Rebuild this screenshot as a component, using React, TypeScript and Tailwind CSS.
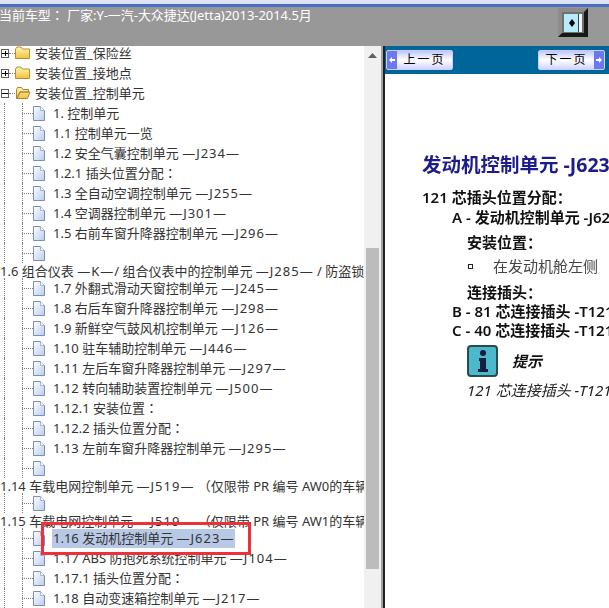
const font = "font-['Noto_Sans','Noto_Sans_CJK_SC',sans-serif]";

const Folder = ({ open }: { open?: boolean }) => (
  <svg width="16" height="14" viewBox="0 0 16 14" className="shrink-0">
    <defs>
      <linearGradient id="fold" x1="0" y1="0" x2="0" y2="1">
        <stop offset="0" stopColor="#fff6b8" />
        <stop offset="1" stopColor="#f2c234" />
      </linearGradient>
    </defs>
    {open ? (
      <path d="M1.5 3.5 L2.5 1.5 H6.5 L8 3.5 H13.5 V6 H5 L2 12.5 H1.5 Z M5 6 H15 L12.5 12.5 H2 Z" fill="url(#fold)" stroke="#a8863c" strokeWidth="1" />
    ) : (
      <path d="M0.5 3 L2 1 H6 L7.5 3 H14.5 V12.5 H0.5 Z" fill="url(#fold)" stroke="#b0903c" strokeWidth="1" />
    )}
  </svg>
);

const Doc = () => (
  <svg width="12" height="15" viewBox="0 0 12 15" className="shrink-0">
    <defs>
      <linearGradient id="page" x1="0" y1="0" x2="1" y2="1">
        <stop offset="0" stopColor="#ffffff" />
        <stop offset="1" stopColor="#b8cdf0" />
      </linearGradient>
    </defs>
    <path d="M0.5 0.5 H7.5 L11.5 4.5 V14.5 H0.5 Z" fill="url(#page)" stroke="#7c8eb4" />
    <path d="M7.5 0.5 V4.5 H11.5" fill="#fff" stroke="#a4b4d0" />
  </svg>
);

const Toggle = ({ minus }: { minus?: boolean }) => (
  <span className="relative ml-px flex h-[9px] w-[8px] shrink-0 items-center justify-center border border-[#606060] bg-white">
    <span className="h-px w-[6px] bg-black" />
    {!minus && <span className="absolute h-[5px] w-px bg-black" />}
  </span>
);

// centred full-width colon, the TC face draws it that way
const Colon = () => <span className="font-['Noto_Sans_CJK_TC',sans-serif]">：</span>;

// the —J234— part sits wider in the picture than the plain font gives
const Label = ({ text }: { text: string }) => (
  <span>
    {text.split(/(—\S+—|：)/).map((part, i) => {
      if (part === "：") return <Colon key={i} />;
      return i % 2 ? (
        <span key={i} className="tracking-[1px]">{part}</span>
      ) : (
        <span key={i}>{part}</span>
      );
    })}
  </span>
);

const FolderRow = ({ label, open }: { label: string; open?: boolean }) => (
  <div className="flex h-5 items-center">
    <Toggle minus={open} />
    <span className="w-[6px] border-t border-dotted border-[#808080]" />
    <Folder open={open} />
    <span className="ml-[4px] whitespace-nowrap">{label}</span>
  </div>
);

const Branch = () => (
  <>
    <span className="absolute bottom-0 left-[4px] top-0 border-l border-dotted border-[#808080]" />
    <span className="absolute bottom-0 left-[22px] top-0 border-l border-dotted border-[#808080]" />
    <span className="w-[11px] border-t border-dotted border-[#808080]" />
    <Doc />
  </>
);

const Leaf = ({ label }: { label?: string }) => (
  <div className="relative flex h-5 items-center pl-[22px]">
    <Branch />
    {label && (
      <span className="ml-[8px] whitespace-nowrap">
        <Label text={label} />
      </span>
    )}
  </div>
);

const Wide = ({ label }: { label: string }) => (
  <div className="flex h-[15px] items-center whitespace-nowrap">
    <Label text={label} />
  </div>
);

const NavButton = ({ label, next }: { label: string; next?: boolean }) => (
  <div className={`flex h-[20px] w-[67px] items-center overflow-hidden rounded-[2px] border border-[#c8d0f8] bg-gradient-to-b from-[#c0c6f8] via-white to-[#d0d4fa] ${next ? "flex-row-reverse" : ""}`}>
    <span className="flex h-full w-[10px] shrink-0 items-center justify-center bg-[#6c78f0]">
      <svg width="8" height="8" viewBox="0 0 8 8">
        <path d={next ? "M1 3 H4 V1 L7 4 L4 7 V5 H1 Z" : "M7 3 H4 V1 L1 4 L4 7 V5 H7 Z"} fill="#fff" />
      </svg>
    </span>
    <span className="flex-1 text-center text-[12px] tracking-[2px] text-black">{label}</span>
  </div>
);

export default function App() {
  return (
    <div className={`relative flex h-[608px] w-[609px] flex-col overflow-hidden bg-white ${font}`}>
      <div className="h-[4px] bg-[#dbe3f5]" />
      <div className="h-[3px] bg-[#4a6cc4]" />
      <div className="flex h-[39px] items-start bg-[#989898]">
        <span className="-ml-px flex-1 whitespace-nowrap text-[13px] leading-[15px] tracking-[-0.05px] text-white">
          当前车型<Colon />&nbsp;厂家:Y-一汽-大众捷达(Jetta)2013-2014.5月
        </span>
        <div className="mr-[21px] mt-[1px] flex h-[29px] w-[30px] items-center justify-center border-[4px] border-b-[#181818] border-l-[#8c8c8c] border-r-[#181818] border-t-[#8c8c8c] bg-[#707070]">
          <div className="flex h-[18px] w-[18px] items-center justify-center bg-[#b4ecfc]">
            <svg width="18" height="18" viewBox="0 0 18 18">
              <path d="M8 5 L11 9 L8 13 L5 9 Z" fill="#000" />
              <rect x="14" y="0" width="1" height="18" fill="#404040" />
              <rect x="15" y="0" width="3" height="18" fill="#f4f4f4" />
            </svg>
          </div>
        </div>
      </div>

      <div className="flex min-h-0 flex-1">
        <div className="w-[364px] shrink-0 overflow-hidden text-[13px] leading-5 text-[#333]">
          <div className="-mt-[3px]">
            <FolderRow label="安装位置_保险丝" />
            <FolderRow label="安装位置_接地点" />
            <FolderRow label="安装位置_控制单元" open />
            <Leaf label="1. 控制单元" />
            <Leaf label="1.1 控制单元一览" />
            <Leaf label="1.2 安全气囊控制单元 —J234—" />
            <Leaf label="1.2.1 插头位置分配：" />
            <Leaf label="1.3 全自动空调控制单元 —J255—" />
            <Leaf label="1.4 空调器控制单元 —J301—" />
            <Leaf label="1.5 右前车窗升降器控制单元 —J296—" />
            <Leaf />
            <Wide label="1.6 组合仪表 —K—/ 组合仪表中的控制单元 —J285— / 防盗锁止系统" />
            <Leaf label="1.7 外翻式滑动天窗控制单元 —J245—" />
            <Leaf label="1.8 右后车窗升降器控制单元 —J298—" />
            <Leaf label="1.9 新鲜空气鼓风机控制单元 —J126—" />
            <Leaf label="1.10 驻车辅助控制单元 —J446—" />
            <Leaf label="1.11 左后车窗升降器控制单元 —J297—" />
            <Leaf label="1.12 转向辅助装置控制单元 —J500—" />
            <Leaf label="1.12.1 安装位置：" />
            <Leaf label="1.12.2 插头位置分配：" />
            <Leaf label="1.13 左前车窗升降器控制单元 —J295—" />
            <Leaf />
            <Wide label="1.14 车载电网控制单元 —J519— （仅限带 PR 编号 AW0的车辆）" />
            <Leaf />
            <Wide label="1.15 车载电网控制单元 —J519— （仅限带 PR 编号 AW1的车辆）" />
            <div className="relative flex h-5 items-center pl-[22px]">
              <Branch />
              <span className="ml-[7px] whitespace-nowrap bg-[#b8c9e6] px-px leading-[19px]">
                <Label text="1.16 发动机控制单元 —J623—" />
              </span>
            </div>
            <Leaf label="1.17 ABS 防抱死系统控制单元 —J104—" />
            <Leaf label="1.17.1 插头位置分配：" />
            <Leaf label="1.18 自动变速箱控制单元 —J217—" />
          </div>
        </div>

        <div className="flex w-[17px] shrink-0 flex-col items-center bg-[#f0f0f0]">
          <svg width="9" height="5" viewBox="0 0 9 5" className="mt-[7px]">
            <path d="M4.5 0 L9 5 H0 Z" fill="#606060" />
          </svg>
          <div className="mt-[190px] h-[321px] w-[13px] bg-[#bcbcbc]" />
        </div>

        <div className="w-[2px] shrink-0 bg-[#a0a0a0]" />
        <div className="w-[2px] shrink-0 bg-[#202020]" />

        <div className="min-w-0 flex-1 overflow-hidden">
          <div className="flex h-[28px] items-center justify-between bg-[#006699] pl-[1px] pr-[4px]">
            <NavButton label="上一页" />
            <NavButton label="下一页" next />
          </div>
          <div className="whitespace-nowrap pl-[37px] pt-[78px] font-semibold text-[#111] blur-[0.4px]">
            <div className="text-[19.5px] font-bold leading-[26px] text-[#1c1c8c]">发动机控制单元 -J623-</div>
            <div className="mt-[9px] text-[15px] leading-[20px]">121 芯插头位置分配：</div>
            <div className="pl-[30px] text-[15px] leading-[20px]">A - 发动机控制单元 -J623-</div>
            <div className="mt-[5px] pl-[45px] text-[15px] leading-[20px]">安装位置：</div>
            <div className="mt-[4px] flex items-center pl-[46px] text-[15px] font-normal leading-[20px] text-[#444]">
              <span className="h-[5px] w-[5px] border border-[#222]" />
              <span className="ml-[20px]">在发动机舱左侧</span>
            </div>
            <div className="mt-[6px] pl-[45px] text-[15px] leading-[20px]">连接插头：</div>
            <div className="pl-[30px] text-[15px] leading-[19px]">B - 81 芯连接插头 -T121</div>
            <div className="pl-[30px] text-[15px] leading-[19px]">C - 40 芯连接插头 -T121</div>
            <div className="mt-[5px] flex items-center pl-[45px]">
              <span className="flex h-[32px] w-[31px] items-center justify-center rounded-[4px] border-2 border-[#2a4a50] bg-[#4cb8cc]">
                <svg width="14" height="24" viewBox="0 0 14 24">
                  <circle cx="7" cy="4" r="3" fill="#152040" />
                  <path d="M3 9 H10 V20 H12 V23 H2 V20 H4 V12 H3 Z" fill="#152040" />
                </svg>
              </span>
              <span className="ml-[14px] text-[15px] font-bold italic">提示</span>
            </div>
            <div className="mt-[3px] pl-[45px] text-[15px] font-normal italic leading-[20px] text-[#222]">121 芯连接插头 -T121</div>
          </div>
        </div>
      </div>

      <div className="absolute left-[41px] top-[522px] h-[33px] w-[210px] border-[3px] border-[#f03038]" />
    </div>
  );
}
